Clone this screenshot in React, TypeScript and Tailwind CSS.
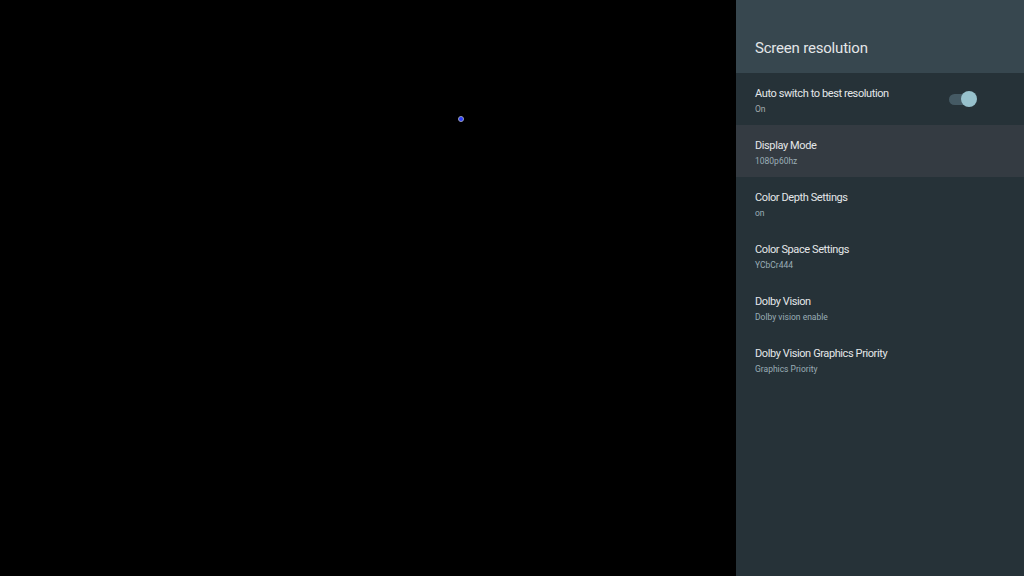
const rows = [
  { title: "Auto switch to best resolution", sub: "On", toggle: true },
  { title: "Display Mode", sub: "1080p60hz", active: true },
  { title: "Color Depth Settings", sub: "on" },
  { title: "Color Space Settings", sub: "YCbCr444" },
  { title: "Dolby Vision", sub: "Dolby vision enable" },
  { title: "Dolby Vision Graphics Priority", sub: "Graphics Priority" },
];

const Toggle = () => (
  <div className="relative w-[28px] h-[16px] flex items-center">
    <div className="w-[26px] h-[11px] rounded-full bg-[#455a64]" />
    <div className="absolute right-0 w-[16px] h-[16px] rounded-full bg-[#97c1cc]" />
  </div>
);

export default function App() {
  return (
    <div
      className="w-[1024px] h-[576px] flex bg-black overflow-hidden"
      style={{ fontFamily: "Roboto, 'Liberation Sans', sans-serif" }}
    >
      <div className="flex-1 relative">
        <div className="absolute left-[458px] top-[116px] w-[6px] h-[6px] rounded-full border border-[#9aa0b8] bg-[#2a3cff]" />
      </div>
      <div className="w-[288px] h-full bg-[#263238] flex flex-col">
        <div className="h-[73px] bg-[#37474f] flex items-center pl-[19px] pt-[24px]">
          <span className="text-[15px] text-[#e3e6e8] tracking-[-0.2px]">Screen resolution</span>
        </div>
        {rows.map((r) => (
          <div
            key={r.title}
            className={`h-[52px] flex items-center justify-between pl-[19px] pr-[47px] ${
              r.active ? "bg-[#343b42]" : ""
            }`}
          >
            <div className="flex flex-col pt-[3px]">
              <span className="text-[11px] leading-[14px] text-[#e4e7e9] tracking-[-0.4px]">
                {r.title}
              </span>
              <span
                className={`text-[8.5px] leading-[12px] mt-[2px] ${
                  r.toggle ? "text-[#a3aaae]" : "text-[#9aadb6]"
                }`}
              >
                {r.sub}
              </span>
            </div>
            {r.toggle && <Toggle />}
          </div>
        ))}
      </div>
    </div>
  );
}
